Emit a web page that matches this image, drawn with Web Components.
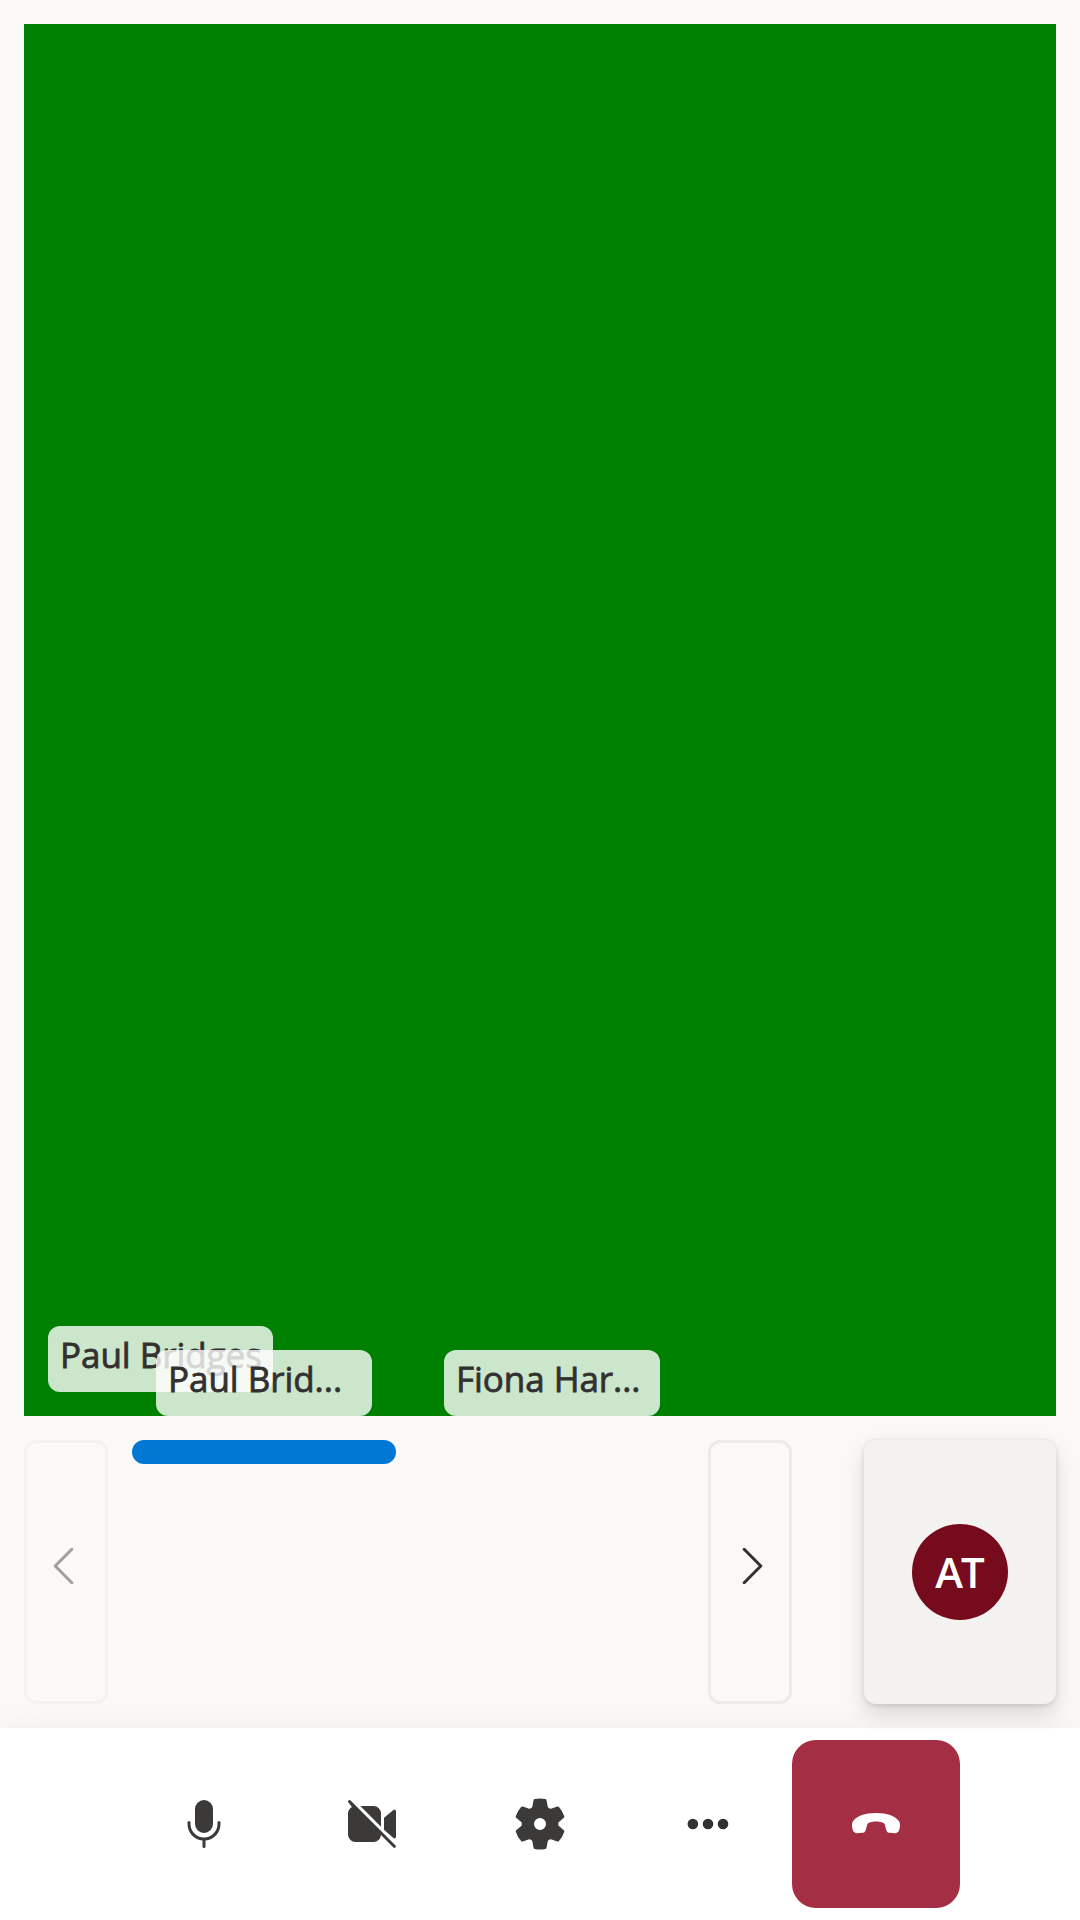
<!DOCTYPE html>
<html lang="en">
<head>
<meta charset="utf-8">
<title>Call</title>
<style>
html,body{margin:0;height:100%}
body{font-family:"Segoe UI","Open Sans","Noto Sans",sans-serif;color:#323130;background:#faf9f8;overflow:hidden}
</style>
</head>
<body>
<call-screen></call-screen>
<script>
const define = (name, html) => customElements.define(name, class extends HTMLElement {
  constructor() {
    super();
    this.attachShadow({mode: 'open'}).innerHTML = html;
  }
});

define('name-label', `<style>
:host{display:block;box-sizing:border-box;height:66px;padding:0 12px;border-radius:12px;background:rgba(255,255,255,.8);font-size:35px;font-weight:400;line-height:58px;letter-spacing:var(--label-spacing,-.05px);-webkit-text-stroke:.8px #323130;color:#323130}
div{overflow:hidden;white-space:nowrap;height:66px}
</style><div><slot></slot></div>`);

define('video-stage', `<style>
:host{display:flex;box-sizing:border-box;height:1392px;padding:24px;background:#008000;align-items:flex-end}
</style><slot></slot>`);

define('strip-tile', `<style>
:host{display:block;position:relative;width:264px;height:24px}
.ring{height:24px;border-radius:12px}
:host([speaking]) .ring{background:#0078d4}
.tag{position:absolute;left:24px;right:24px;bottom:48px}
</style><div class="ring"></div><div class="tag"><slot></slot></div>`);

define('page-button', `<style>
:host{display:flex;box-sizing:border-box;width:84px;height:264px;border:3px solid #edebe9;border-radius:12px;align-items:center;justify-content:center;color:#323130}
:host([disabled]){border-color:#f3f2f1;color:#a19f9d}
svg{width:36px;height:36px;margin-top:-12px;fill:none;stroke:currentColor;stroke-width:3;stroke-linecap:round;stroke-linejoin:round}
:host([disabled]) svg{transform:scaleX(-1)}
</style><svg viewBox="0 0 36 36"><path d="M12.2 1.3 28.8 18 12.2 34.7"/></svg>`);

define('local-tile', `<style>
:host{display:flex;width:192px;height:264px;border-radius:12px;background:#f3f2f1;align-items:center;justify-content:center;position:relative;z-index:1;box-shadow:0 9.6px 21.6px rgba(0,0,0,.132),0 1.8px 5.4px rgba(0,0,0,.108)}
div{width:96px;height:96px;border-radius:50%;background:#750b1c;color:#fff;font-size:42px;font-weight:600;line-height:95px;text-align:center;letter-spacing:-2px;text-indent:-2px}
</style><div><slot></slot></div>`);

define('control-button', `<style>
:host{display:flex;width:168px;height:168px;border-radius:24px;align-items:center;justify-content:center;color:#3b3a39}
:host([danger]){background:#a42e43;color:#fff}
::slotted(svg){width:60px;height:60px;fill:currentColor}
</style><slot></slot>`);

define('control-bar', `<style>
:host{display:flex;box-sizing:border-box;height:192px;padding:12px 0;justify-content:center;background:#fff;box-shadow:0 19.2px 43.2px rgba(0,0,0,.132)}
</style>
<control-button><svg viewBox="0 0 20 20"><path d="M10 13a3 3 0 0 0 3-3V5a3 3 0 0 0-6 0v5a3 3 0 0 0 3 3ZM5 9a.5.5 0 0 1 .5.5v.5a4.5 4.5 0 0 0 9 0v-.5a.5.5 0 0 1 1 0v.5a5.5 5.5 0 0 1-5 5.48v2.02a.5.5 0 0 1-1 0v-2.02a5.5 5.5 0 0 1-5-5.48v-.5A.5.5 0 0 1 5 9Z"/></svg></control-button>
<control-button><svg viewBox="0 0 20 20"><path d="M2.15 2.15a.5.5 0 0 1 .7 0l15 15a.5.5 0 0 1-.7.7L13 13.7A2.5 2.5 0 0 1 10.5 16h-6A2.5 2.5 0 0 1 2 13.500v-7c0-.95.53-1.780 1.310-2.200L2.150 2.850a.5.5 0 0 1 0-.7ZM6.120 4h4.380A2.500 2.500 0 0 1 13 6.500v4.380L6.120 4ZM14 11.880V7.930l3.150-2.600c.33-.28.85-.04.85.390v8.560c0 .43-.5.670-.83.4L14 11.880Z"/></svg></control-button>
<control-button><svg viewBox="0 0 20 20"><path d="M1.91 7.38A8.5 8.5 0 0 1 3.7 4.3a.5.5 0 0 1 .54-.13l1.92.68a1 1 0 0 0 1.32-.76l.36-2a.5.5 0 0 1 .4-.4 8.53 8.53 0 0 1 3.55 0c.2.04.35.2.38.4l.37 2a1 1 0 0 0 1.32.76l1.92-.68a.5.5 0 0 1 .54.13 8.5 8.5 0 0 1 1.78 3.08c.06.2 0 .4-.15.54l-1.56 1.32a1 1 0 0 0 0 1.52l1.56 1.32a.5.5 0 0 1 .15.54 8.5 8.5 0 0 1-1.78 3.08.5.5 0 0 1-.54.13l-1.92-.68a1 1 0 0 0-1.32.76l-.37 2a.5.5 0 0 1-.38.4 8.53 8.53 0 0 1-3.56 0 .5.5 0 0 1-.39-.4l-.36-2a1 1 0 0 0-1.32-.76l-1.92.68a.5.5 0 0 1-.54-.13 8.5 8.5 0 0 1-1.78-3.08.5.5 0 0 1 .15-.54l1.56-1.32a1 1 0 0 0 0-1.52L2.06 7.92a.5.5 0 0 1-.15-.54ZM8 10a2 2 0 1 0 4 0 2 2 0 0 0-4 0Z"/></svg></control-button>
<control-button style="color:#323130"><svg viewBox="0 0 20 20"><circle cx="4.95" cy="10" r="1.77"/><circle cx="10" cy="10" r="1.77"/><circle cx="15" cy="10" r="1.77"/></svg></control-button>
<control-button danger><svg viewBox="0 0 20 20"><path d="M10 6.350c3.800 0 6.300 1 7.500 2.500.43.530.57 1.250.45 2.150-.08.600-.18 1-.38 1.370-.28.520-.65.700-1.300.680l-1.650-.12c-.65-.05-.98-.3-1.200-.96-.17-.5-.3-1.030-.46-1.720-.06-.3-.18-.47-.5-.6C11.800 9.400 11 9.200 10 9.200s-1.800.2-2.460.45c-.32.130-.44.300-.5.600-.16.690-.29 1.220-.46 1.720-.22.660-.55.910-1.200.960l-1.650.12c-.65.020-1.020-.16-1.300-.68-.2-.37-.3-.77-.38-1.370-.12-.9.020-1.620.45-2.150 1.200-1.500 3.700-2.500 7.500-2.500Z"/></svg></control-button>`);

define('call-screen', `<style>
:host{display:flex;flex-direction:column;width:1080px;height:1920px;background:#faf9f8}
main{box-sizing:border-box;height:1728px;padding:24px;display:flex;flex-direction:column;gap:24px}
.strip{display:flex;justify-content:space-between;align-items:flex-start}
.pages{display:flex;gap:24px}
.stage-label{width:225px}
local-tile{margin-left:auto}
</style>
<main>
<video-stage><name-label class="stage-label">Paul Bridges</name-label></video-stage>
<div class="strip">
<div class="pages"><page-button disabled></page-button>
<strip-tile speaking><name-label>Paul Brid...</name-label></strip-tile>
<strip-tile><name-label>Fiona Har...</name-label></strip-tile>
<page-button></page-button></div>
<local-tile>AT</local-tile>
</div>
</main>
<control-bar></control-bar>`);
</script>
</body>
</html>
